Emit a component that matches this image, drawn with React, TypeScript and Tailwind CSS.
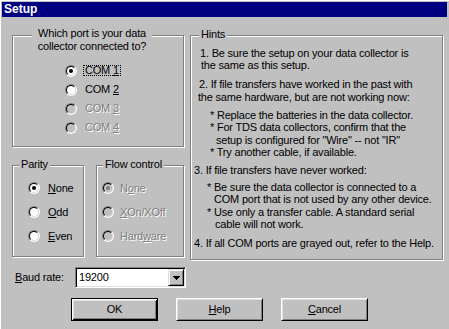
import React from "react";

function Radio({ checked, disabled }: { checked?: boolean; disabled?: boolean }) {
  return (
    <span className="flex items-center justify-center w-[12px] h-[12px] shrink-0 rounded-full border border-t-[#808080] border-l-[#808080] border-r-white border-b-white">
      <span
        className={`flex items-center justify-center w-[10px] h-[10px] rounded-full border border-t-black border-l-black border-r-[#dfdfdf] border-b-[#dfdfdf] ${
          disabled ? "bg-[#c0c0c0]" : "bg-white"
        }`}
      >
        {checked && (
          <span className={`w-[4px] h-[4px] rounded-full ${disabled ? "bg-[#808080]" : "bg-black"}`} />
        )}
      </span>
    </span>
  );
}

function U({ children }: { children: React.ReactNode }) {
  return <span className="underline underline-offset-[1px]">{children}</span>;
}

const disabledText = "text-[#808080] [text-shadow:1px_1px_0_#fff]";

function RadioRow({
  checked,
  disabled,
  focus,
  gap,
  height,
  children,
}: {
  checked?: boolean;
  disabled?: boolean;
  focus?: boolean;
  gap: string;
  height: string;
  children: React.ReactNode;
}) {
  return (
    <div className={`flex items-center ${gap} ${height}`}>
      <Radio checked={checked} disabled={disabled} />
      <span
        className={`border border-dotted px-[1px] leading-[9px] whitespace-nowrap ${
          focus ? "border-black" : "border-transparent"
        } ${disabled ? disabledText : ""}`}
      >
        {children}
      </span>
    </div>
  );
}

const groupBox =
  "relative border border-[#808080] shadow-[1px_1px_0_#fff,inset_1px_1px_0_#fff]";

export default function App() {
  return (
    <div className="w-[449px] h-[329px] overflow-hidden bg-[#c0c0c0] border-l border-t border-white pt-[1px] pl-[1px] pr-[2px] flex flex-col font-['Liberation_Sans',Arial,sans-serif] text-[11px] leading-[13px] tracking-[-0.2px] text-black">
      {/* Title bar */}
      <div className="h-[15px] bg-[#000080] text-white font-bold text-[12px] tracking-normal pl-[2px] flex items-center">
        Setup
      </div>

      {/* Body */}
      <div className="flex pl-[10px] pt-[18px]">
        {/* Left column */}
        <div className="flex flex-col w-[172px]">
          <div className={`${groupBox} w-[172px] h-[112px]`}>
            <div className="absolute left-[19px] top-[-9px] w-[120px] bg-[#c0c0c0] text-center leading-[13px]">
              Which port is your data
              <br />
              collector connected to?
            </div>
            <div className="flex flex-col pl-[52px] pt-[25px]">
              <RadioRow checked focus gap="gap-[6px]" height="h-[19px]">
                COM <U>1</U>
              </RadioRow>
              <RadioRow gap="gap-[6px]" height="h-[19px]">
                COM <U>2</U>
              </RadioRow>
              <RadioRow disabled gap="gap-[6px]" height="h-[19px]">
                COM <U>3</U>
              </RadioRow>
              <RadioRow disabled gap="gap-[6px]" height="h-[19px]">
                COM <U>4</U>
              </RadioRow>
            </div>
          </div>

          <div className="flex mt-[18px]">
            <div className={`${groupBox} w-[72px] h-[92px]`}>
              <div className="absolute left-[6px] top-[-8px] bg-[#c0c0c0] px-[2px]">Parity</div>
              <div className="flex flex-col pl-[15px] pt-[10px]">
                <RadioRow checked gap="gap-[6px]" height="h-[24px]">
                  <U>N</U>one
                </RadioRow>
                <RadioRow gap="gap-[6px]" height="h-[24px]">
                  <U>O</U>dd
                </RadioRow>
                <RadioRow gap="gap-[6px]" height="h-[24px]">
                  <U>E</U>ven
                </RadioRow>
              </div>
            </div>
            <div className={`${groupBox} ml-[12px] w-[88px] h-[92px]`}>
              <div className="absolute left-[6px] top-[-8px] bg-[#c0c0c0] px-[2px]">Flow control</div>
              <div className="flex flex-col pl-[5px] pt-[10px]">
                <RadioRow checked disabled gap="gap-[4px]" height="h-[24px]">
                  N<U>o</U>ne
                </RadioRow>
                <RadioRow disabled gap="gap-[4px]" height="h-[24px]">
                  <U>X</U>On/XOff
                </RadioRow>
                <RadioRow disabled gap="gap-[4px]" height="h-[24px]">
                  Hard<U>w</U>are
                </RadioRow>
              </div>
            </div>
          </div>
        </div>

        {/* Hints */}
        <div className={`${groupBox} ml-[6px] w-[253px] h-[225px]`}>
          <div className="absolute left-[8px] top-[-8px] bg-[#c0c0c0] px-[2px]">Hints</div>
          <div className="flex flex-col pt-[10.5px] leading-[12.5px] whitespace-nowrap">
            <div className="pl-[9px]">1. Be sure the setup on your data collector is</div>
            <div className="pl-[10px]">the same as this setup.</div>
            <div className="pl-[8px] mt-[6.5px]">2. If file transfers have worked in the past with</div>
            <div className="pl-[7px]">the same hardware, but are not working now:</div>
            <div className="pl-[19px] mt-[5.5px]">* Replace the batteries in the data collector.</div>
            <div className="pl-[19px]">* For TDS data collectors, confirm that the</div>
            <div className="pl-[25px]">setup is configured for "Wire" -- not "IR"</div>
            <div className="pl-[19px]">* Try another cable, if available.</div>
            <div className="pl-[3px] mt-[5px]">3. If file transfers have never worked:</div>
            <div className="pl-[16px] mt-[4.5px]">* Be sure the data collector is connected to a</div>
            <div className="pl-[23px]">COM port that is not used by any other device.</div>
            <div className="pl-[16px]">* Use only a transfer cable. A standard serial</div>
            <div className="pl-[24px]">cable will not work.</div>
            <div className="pl-[3px] mt-[6px]">4. If all COM ports are grayed out, refer to the Help.</div>
          </div>
        </div>
      </div>

      {/* Baud rate */}
      <div className="flex items-center mt-[7px] pl-[13px]">
        <div className="w-[60px]">
          <U>B</U>aud rate:
        </div>
        <div className="flex items-center justify-between w-[111px] h-[21px] bg-white border border-t-[#808080] border-l-[#808080] border-r-white border-b-white shadow-[inset_1px_1px_0_#000,inset_-1px_-1px_0_#dfdfdf] pl-[2px] pr-[1px]">
          <span className="pl-[1px]">19200</span>
          <div className="flex items-center justify-center w-[16px] h-[17px] bg-[#c0c0c0] border border-t-[#dfdfdf] border-l-[#dfdfdf] border-r-black border-b-black shadow-[inset_1px_1px_0_#fff,inset_-1px_-1px_0_#808080]">
            <svg width="7" height="4" viewBox="0 0 7 4" shapeRendering="crispEdges">
              <path d="M0 0h7v1H0zM1 1h5v1H1zM2 2h3v1H2zM3 3h1v1H3z" fill="#000" />
            </svg>
          </div>
        </div>
      </div>

      {/* Buttons */}
      <div className="flex gap-[18px] mt-[10px] pl-[69px]">
        <div className="flex items-center justify-center w-[87px] h-[23px] border border-black shadow-[inset_1px_1px_0_#fff,inset_-1px_-1px_0_#000,inset_2px_2px_0_#dfdfdf,inset_-2px_-2px_0_#808080]">
          OK
        </div>
        <div className="flex items-center justify-center w-[87px] h-[23px] border border-t-white border-l-white border-r-black border-b-black shadow-[inset_1px_1px_0_#dfdfdf,inset_-1px_-1px_0_#808080]">
          <U>H</U>elp
        </div>
        <div className="flex items-center justify-center w-[87px] h-[23px] border border-t-white border-l-white border-r-black border-b-black shadow-[inset_1px_1px_0_#dfdfdf,inset_-1px_-1px_0_#808080]">
          <U>C</U>ancel
        </div>
      </div>
    </div>
  );
}
